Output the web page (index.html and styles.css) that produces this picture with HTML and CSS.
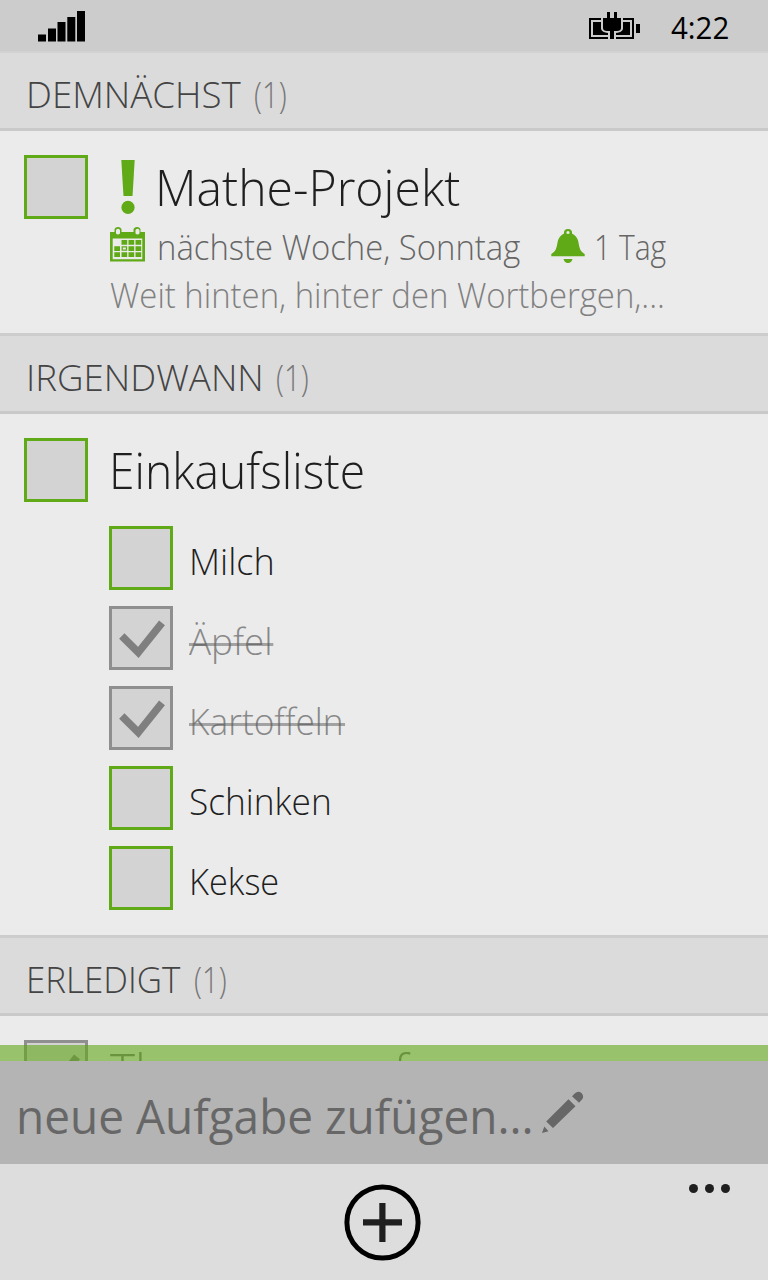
FILE: index.html
```
<!DOCTYPE html>
<html lang="de">
<head>
<meta charset="utf-8">
<title>Aufgaben</title>
<link rel="stylesheet" href="styles.css">
</head>
<body>
<div class="phone">
  <header class="status">
    <svg class="signal" width="48" height="31" viewBox="0 0 48 31"><path d="M0 23.500h8V30.500H0zM10 17.500h8v13h-8zM19.500 11h8v19.500h-8zM29.300 6h8v24.500h-8zM39 0h8v30.500h-8z"/></svg>
    <svg class="battery" width="52" height="28" viewBox="0 0 52 28">
      <path fill="none" stroke="#000" stroke-width="2" d="M12 7H1v19h18M34 7h10v19H27"/>
      <path d="M4 10h8v7q1 3.500 7 4v2H4zM41 10h-7v7q-1 3.500-7 4v2h14zM47 12h4v9h-4z"/>
      <path d="M18 0h3v6h4V0h3v6h4v10q0 3-4 3h-3v8h-4v-8h-3q-4 0-4-3V6h4z"/>
    </svg>
    <span class="clock">4:22</span>
  </header>

  <main class="list">
    <h2 class="group group-first"><span class="g-name g-soon">DEMNÄCHST</span><span class="count">(1)</span></h2>
    <section class="tasks tasks-soon">
      <article class="task">
        <span class="box"></span>
        <div class="body">
          <div class="title title-important">
            <svg class="bang" width="14" height="54" viewBox="0 0 14 54"><path d="M.300 0h13.400l-2.200 36H2.500z"/><circle cx="7" cy="47.400" r="6.600"/></svg>
            <span class="t-mathe">Mathe-Projekt</span>
          </div>
          <div class="meta">
            <svg class="calendar" width="35" height="35" viewBox="0 0 35 35">
              <path fill-rule="evenodd" d="M0 5h4.500V2.500Q5 0 8 0t3.500 2.500V5h12V2.500Q24 0 27 0t3.500 2.500V5H35v29.500H0zM6 3v3.500Q8 8.500 10 6.500V3Q8 .500 6 3zM25.500 3v3.500q2 2 4 0V3q-2-2.500-4 0zM2.700 11.500v20.800h29.600V11.500z"/>
              <path d="M11.500 13h5.700v4.700h-5.700zM18.500 13h5.700v4.700h-5.700zM25.500 13h5.700v4.700h-5.700zM4.300 19.200H10v4.700H4.300zM18.500 19.200h5.700v4.700h-5.700zM25.500 19.200h5.700v4.700h-5.700zM4.300 25.300H10V30H4.300zM11.500 25.300h5.700V30h-5.700zM18.500 25.300h5.700V30h-5.700zM25.500 25.300h5.700V30h-5.700z"/>
              <path fill="none" stroke="#60a917" stroke-width="1.300" d="M12.200 19.900h4.300v3.300h-4.300z"/>
            </svg>
            <span class="due">nächste Woche, Sonntag</span>
            <svg class="bell" width="34" height="35" viewBox="0 0 34 35"><path fill-rule="evenodd" d="M13 4.500V3.500a4 3.500 0 0 1 8 0v1Q26 7 27.300 12.500C28.500 20 29.500 22.500 33.700 25v2.300H.300V25C4.500 22.500 5.500 20 6.700 12.500Q8 7 13 4.500zM15.400 3.500a1.600 1.600 0 1 0 3.200 0 1.600 1.600 0 0 0-3.200 0zM12.500 30h9q-1 4-4.500 4t-4.500-4z"/></svg>
            <span class="remind">1 Tag</span>
          </div>
          <div class="note">Weit hinten, hinter den Wortbergen,...</div>
        </div>
      </article>
    </section>

    <h2 class="group"><span class="g-name g-later">IRGENDWANN</span><span class="count">(1)</span></h2>
    <section class="tasks tasks-later">
      <article class="task">
        <span class="box"></span>
        <div class="body"><div class="title"><span class="t-einkauf">Einkaufsliste</span></div></div>
      </article>
      <ul class="subtasks">
        <li><span class="box"></span><span class="sub s-milch">Milch</span></li>
        <li class="done"><span class="box"><svg width="58" height="58" viewBox="0 0 58 58"><path d="M9.800 27L26.300 43.500 50 13.900"/></svg></span><span class="sub s-apfel">Äpfel</span></li>
        <li class="done"><span class="box"><svg width="58" height="58" viewBox="0 0 58 58"><path d="M9.800 27L26.300 43.500 50 13.900"/></svg></span><span class="sub s-kart">Kartoffeln</span></li>
        <li><span class="box"></span><span class="sub s-schinken">Schinken</span></li>
        <li><span class="box"></span><span class="sub s-kekse">Kekse</span></li>
      </ul>
    </section>

    <h2 class="group"><span class="g-name g-done">ERLEDIGT</span><span class="count">(1)</span></h2>
    <section class="tasks tasks-done">
      <article class="task done">
        <span class="box"><svg width="58" height="58" viewBox="0 0 58 58"><path d="M9.800 27L26.300 43.500 50 13.900"/></svg></span>
        <div class="body"><div class="title"><span class="t-thomas">Thomas anrufen</span></div></div>
      </article>
    </section>
    <div class="accent"></div>
  </main>

  <div class="compose">
    <span class="prompt">neue Aufgabe zufügen...</span>
    <svg width="43" height="43" viewBox="0 0 43 43"><path d="M1 42l2.300-6.500 4.200 4.700zM5.200 30.500L27.500 8.200l7 7L12 37zM31 5.300l3-3Q37-.800 40.500 2q3 3.500.500 6.500l-3 3.300z"/></svg>
  </div>

  <footer class="appbar">
    <svg class="add" width="78" height="78" viewBox="0 0 78 78"><circle cx="39.500" cy="39.500" r="35.600" fill="none" stroke="#000" stroke-width="5"/><path fill="#1f1f1f" d="M36.300 20h6.200v16.300H59v6.200H42.500V59h-6.200V42.500H20v-6.200h16.300z"/></svg>
    <div class="more"><i></i><i></i><i></i></div>
  </footer>
</div>
</body>
</html>
```
FILE: styles.css
```
* { box-sizing: border-box; }
body { margin: 0; font-family: "Open Sans", "Noto Sans", sans-serif; font-weight: 300; }
span, .note { white-space: nowrap; }
svg { display: block; flex: none; }

.phone { width: 768px; height: 1280px; display: flex; flex-direction: column; background: #ebebeb; overflow: hidden; }

/* Text is set slightly condensed */
.clock, .g-name, .count, .t-mathe, .t-einkauf, .t-thomas, .due, .remind, .note, .sub, .prompt { transform-origin: 0 50%; }

.status { flex: none; height: 51px; background: #ccc; display: flex; align-items: flex-start; padding-left: 38px; }
.signal { margin-top: 11px; }
.battery { margin: 12px 0 0 503px; }
.clock { margin: 7px 0 0 29.500px; font-size: 31px; line-height: 40px; font-weight: 400; transform: scaleX(0.950); }

.list { position: relative; flex: 1; min-height: 0; overflow: hidden; }

.group { margin: 0; height: 81px; padding: 5px 0 0 26px; background: #dbdbdb; border-top: 3px solid #cdcdcd; border-bottom: 3px solid #c9c9c9; font-size: 37.500px; line-height: 71px; font-weight: 300; color: #444; display: flex; }
.group-first { height: 80px; border-top: 2px solid #d2d2d2; }
.g-soon { width: 228px; transform: scaleX(0.978); }
.g-later { width: 250px; transform: scaleX(0.978); }
.g-done { width: 168px; transform: scaleX(0.932); }
.count { color: #777; transform: scaleX(0.780); }

.tasks { padding: 24px 0 0 24px; }
.tasks-soon { height: 202px; }
.tasks-later { height: 521px; }
.task { display: flex; gap: 22px; color: #1f1f1f; }
.box { flex: none; width: 64px; height: 64px; border: 3px solid #60a917; background: #d3d3d3; }
.done .box { border-color: #8f8f8f; }
.box path { fill: none; stroke: #7f7f7f; stroke-width: 7.500px; }

.title { font-size: 50.500px; line-height: 63px; height: 61px; display: flex; }
.title-important { padding-left: 11px; }
.bang { margin: 5px 19.500px 0 0; fill: #60a917; }
.t-mathe { transform: scaleX(0.953); }
.t-einkauf { margin-left: -1px; transform: scaleX(0.915); }
.t-thomas { color: #777; line-height: 61px; transform: scaleX(0.945); }

.meta { display: flex; margin-top: 5.500px; height: 48px; font-size: 34.500px; line-height: 49px; color: #666; }
.calendar { fill: #60a917; margin: 5.500px 12px 0 0; }
.due { width: 393.500px; transform: scaleX(0.952); }
.bell { fill: #60a917; margin: 7px 9px 0 0; }
.remind { transform: scaleX(0.870); }
.note { font-size: 34.500px; line-height: 49px; color: #808080; transform: scaleX(0.953); }

.subtasks { list-style: none; margin: 24px 0 0 85px; padding: 0; display: flex; flex-direction: column; gap: 16px; }
.subtasks li { display: flex; height: 64px; gap: 16px; color: #1f1f1f; }
.sub { position: relative; align-self: flex-start; font-size: 37.500px; line-height: 69px; }
.subtasks .done .sub { color: #888; }
.done .sub::after { content: ""; position: absolute; left: 0; right: -1px; top: 37px; height: 3px; background: rgba(90, 90, 90, 0.500); }
.s-milch { transform: scaleX(0.960); }
.s-apfel { transform: scaleX(0.980); }
.s-kart { transform: scaleX(0.940); }
.s-schinken { transform: scaleX(0.940); }
.s-kekse { transform: scaleX(0.915); }

.accent { position: absolute; left: 0; right: 0; bottom: 0; height: 16px; background: rgba(96, 169, 23, 0.600); }

.compose { flex: none; height: 103px; background: #b4b4b4; padding-left: 16px; display: flex; align-items: flex-start; color: #676767; font-size: 47px; line-height: 64px; font-weight: 400; }
.prompt { width: 525px; padding-top: 23px; transform: scaleX(0.978); }
.compose svg { fill: #676767; margin-top: 30px; }

.appbar { flex: none; height: 116px; background: #ddd; display: flex; align-items: flex-start; }
.add { margin: 19px 0 0 343px; }
.more { display: flex; gap: 7px; margin: 20px 0 0 268px; }
.more i { width: 9px; height: 9px; border-radius: 50%; background: #1f1f1f; }
```
